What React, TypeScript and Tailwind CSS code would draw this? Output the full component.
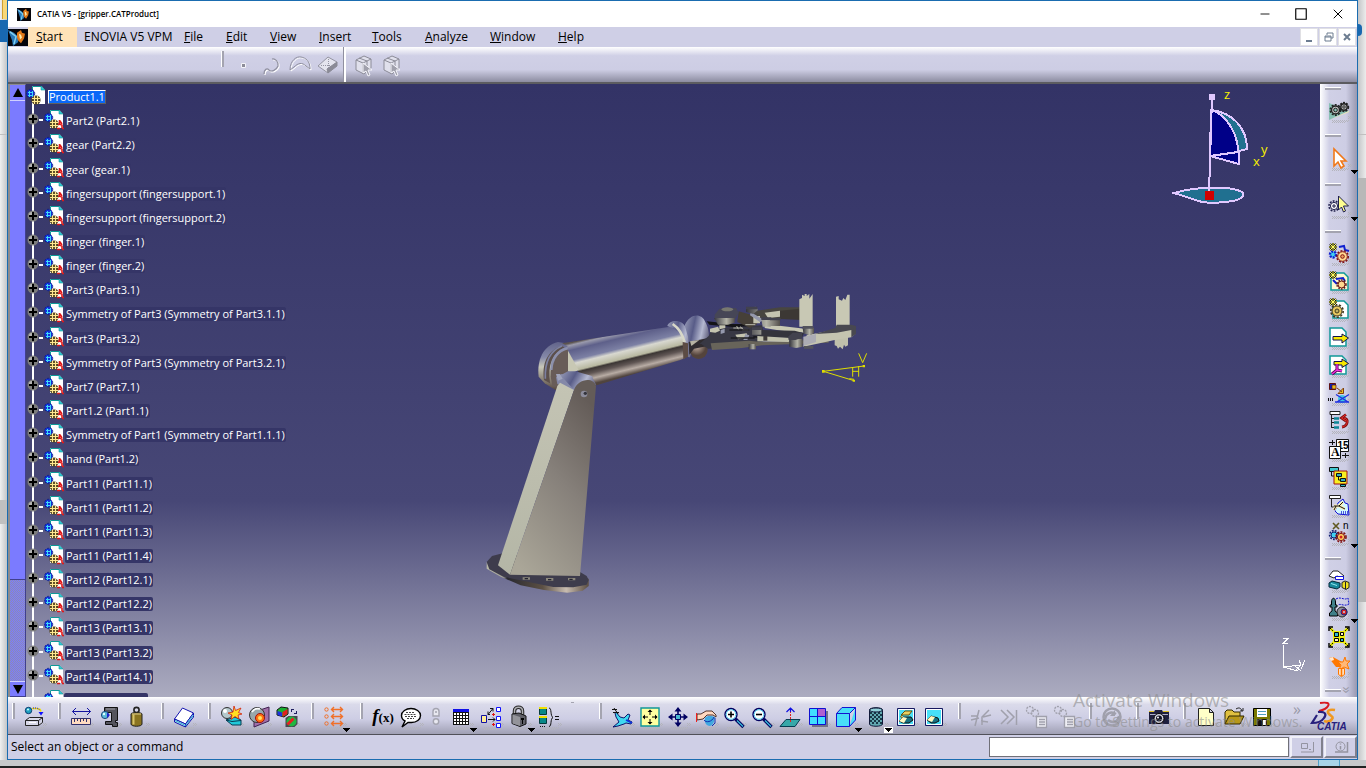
import React from 'react';
import { Minus, Square, X } from 'lucide-react';

const N = '#000060';

/* Toolbar glyphs, all drawn on a 22x22 grid */
const glyphs: Record<string, React.ReactNode> = {
  importBox: (
    <>
      <circle cx="5.5" cy="4.5" r="3.2" fill="#1ea0c0" stroke="#0a3c70" />
      <circle cx="5" cy="3.5" r="1" fill="#d0ffff" />
      <path d="M9 2.5h5l3 1 1 2" fill="none" stroke="#f0e000" strokeWidth="1.6" />
      <path d="M10 2h4l3 2" fill="none" stroke="#1010ff" strokeDasharray="1 1" />
      <path d="M15.5 6h5l-2.5 3.5z" fill="#1010ff" />
      <path d="M2.500 14.500h13v5h-13zM2.500 14.500l4-3h13l-4 3M19.500 11.500v5l-4 3" fill="#d8d8e8" stroke="#222" />
      <path d="M6 16.5h7" stroke="#fff" />
    </>
  ),
  ruler: (
    <>
      <path d="M2.500 5.500h18M6 2L2.500 5.500 6 9M17 2l3.500 3.500L17 9" fill="none" stroke="#1414a0" />
      <path d="M1.500 12.500h19v6h-19z" fill="#ffdcc0" stroke="#30306a" />
      <path d="M4.500 13v3M7.500 13v2M10.500 13v3M13.500 13v2M16.500 13v3" stroke="#30306a" />
    </>
  ),
  clamp: (
    <>
      <path d="M6.500 1.500h13v13h-2v2h2v4h-5v-2h-7v-3h6v-9h-7z" fill="#55555d" stroke="#111" />
      <path d="M8 3h9" stroke="#a0a0a8" />
      <circle cx="7" cy="9" r="3.600" fill="#58b8d8" stroke="#1a4a80" />
      <circle cx="6" cy="8" r="1.200" fill="#e0ffff" />
      <path d="M9 6.500v5.500l3-3z" fill="#2020d0" />
    </>
  ),
  weight: (
    <>
      <circle cx="10.500" cy="4" r="2.600" fill="none" stroke="#222" strokeWidth="1.600" />
      <path d="M5 8c0-2 11-2 11 0v10c0 3-11 3-11 0z" fill="#8a7420" stroke="#222" />
      <path d="M7.500 8.500v10" stroke="#d8c468" strokeWidth="2" />
      <path d="M6 8h9" stroke="#e0d090" />
    </>
  ),
  book: (
    <>
      <path d="M1.500 13l8-11 11 5-8 11z" fill="#fff" stroke="#1414b0" />
      <path d="M1.500 13v3l11 5v-3zM12.500 18v3l8-10V7z" fill="#b8ecf8" stroke="#1414b0" />
      <path d="M2 14.500l10.500 5 8-10.500" fill="none" stroke="#38b0d0" />
    </>
  ),
  blast: (
    <>
      <circle cx="7" cy="7" r="5.500" fill="#b4c8cc" stroke="#333" />
      <circle cx="5" cy="5" r="2" fill="#fff" />
      <path d="M6 14l6 5h9v-5l-6-3z" fill="#20c8d8" stroke="#073a50" />
      <path d="M6 14l6 1.500 9-1" fill="none" stroke="#073a50" />
      <path d="M14 0l1.500 4.500L21 2l-2.500 4.500L22 8l-4 1 1 4-4-2.500-4 3 1-4.500-4-2 5-1z" fill="#ffe020" stroke="#d02010" strokeWidth=".8" />
    </>
  ),
  section: (
    <>
      <path d="M6 6l15-5v14L6 21z" fill="#a070a8" stroke="#402050" />
      <circle cx="9" cy="9" r="7.500" fill="#98a8ac" stroke="#333" />
      <path d="M4 6c2-3 5-4 8-3" stroke="#fff" strokeWidth="1.600" fill="none" />
      <circle cx="12" cy="12" r="4.500" fill="#ff7010" stroke="#a01010" />
      <circle cx="12" cy="12" r="2" fill="#ffe060" />
    </>
  ),
  cubes: (
    <>
      <path d="M1 4l4-3 7 1v6l-4 3-7-2z" fill="#18b030" stroke="#111" />
      <path d="M1.500 5l4.500 1.500v4L1.500 9z" fill="#2030e0" />
      <path d="M6.500 6l5-3v5l-5 3z" fill="#e02020" />
      <path d="M15 3.500h3M15.500 3v3M21 7.500h-3M20.500 8V5" stroke="#202060" />
      <path d="M9.500 12l3-2h9v8l-3 3h-9z" fill="#484850" />
      <circle cx="15.500" cy="15.500" r="5" fill="#20b840" />
      <path d="M11.500 18.500l6-6" stroke="#e82020" strokeWidth="3" />
    </>
  ),
  constraints: (
    <g stroke="#f07028" fill="none">
      {[3.5, 10.5, 17.5].map((y) => (
        <g key={y}>
          <circle cx="3.5" cy={y} r="1.7" />
          <path d={`M8.5 ${y}h11M11 ${y - 2.5}L8.5 ${y} 11 ${y + 2.5}M17 ${y - 2.5}l2.5 2.5-2.5 2.5`} strokeWidth="1.4" />
        </g>
      ))}
    </g>
  ),
  bubble: (
    <>
      <path d="M11 2.500c5 0 9.500 3 9.500 7s-4 7-9 7H8L2 21l3-6c-2-1-3.500-3-3.500-5.500 0-4 4.500-7 9.500-7z" fill="#fff" stroke="#000" strokeWidth="1.400" />
      <path d="M6 6.500h9M4.500 8.500h12M5 10.500h11M7 12.500h7" stroke="#444" strokeDasharray="2 1" />
    </>
  ),
  tiny: (
    <g fill="none" stroke="#a4a4b0" strokeWidth="1.400">
      <path d="M8 10V5.500c0-4 6-4 6 0V10z" fill="#e8e8f0" />
      <circle cx="11" cy="15.500" r="2.700" fill="#e8e8f0" />
      <path d="M10 6h2" />
    </g>
  ),
  table: (
    <>
      <path d="M3 3h16v16H3z" fill="#fff" />
      <path d="M3 3h16v3H3z" fill="#1010e8" />
      <path d="M3 6.500h16M3 9.500h16M3 12.500h16M3 15.500h16M3 18.500h16M3.500 6v13M6.500 6v13M9.500 6v13M12.500 6v13M15.500 6v13M18.500 6v13" stroke="#111" />
    </>
  ),
  tree: (
    <>
      <path d="M1.500 9.500h5v7h-5z" fill="#ffec98" stroke="#1010a0" />
      <path d="M8 13.500h7M8 8.500l5-6M13 11.500l2 2-2 2M10 2.500h3v3M10 8.500H8v-3" fill="none" stroke="#111" />
      <path d="M16.500 1.500h4v4h-4zM16.500 10.500h4v4h-4zM16.500 17.500h4v4h-4z" fill="#fff" stroke="#1010ff" />
      <path d="M12 8.500h3M13.500 7v3M12 18.500h3M13.500 17v3" stroke="#e01010" />
    </>
  ),
  lock: (
    <>
      <path d="M6.500 9V5c0-5 8-5 8 0v4" fill="none" stroke="#222" strokeWidth="3.500" />
      <path d="M6.500 9V5c0-5 8-5 8 0v4" fill="none" stroke="#b0b0b4" strokeWidth="1.500" />
      <path d="M4 8l7-1 7 3v8l-6 2.500-8-3z" fill="#606068" stroke="#111" />
      <path d="M4.500 8.500L12 11v9l-7.500-2.500z" fill="#94949a" />
      <path d="M13 12h3v2h-1v4h-1v-4h-1z" fill="#000" />
    </>
  ),
  brace: (
    <>
      <path d="M1.500 2.500h7v6h-7zM1.500 11.500h7v6h-7z" fill="#088888" stroke="#043c3c" />
      <path d="M1 2h8M1 11h8" stroke="#f0e000" strokeWidth="2" />
      <path d="M2 20.500h6" stroke="#111" strokeDasharray="1 1" />
      <path d="M11 2c3 0 1 8 4 9.500-3 1-1 9-4 9" fill="none" stroke="#111" />
      <path d="M17 10.500h4M17 13.500h4" stroke="#111" />
    </>
  ),
  plane: (
    <>
      <path d="M5 6l4 5 4 1 4-4 2 1-2 5 4 2-1 2-5-1-2 1-6 2-5 1 6-5-3-5-1-4z" fill="#40d8f0" stroke={N} strokeWidth=".9" />
      <path d="M1 3.500h5M2 6.500h6M3 2l4 6" stroke="#111" />
      <path d="M15 14l6 3" stroke="#1030e0" strokeWidth="1.600" />
    </>
  ),
  fit: (
    <>
      <path d="M2 2h18v18H2z" fill="#ffffa0" stroke="#109898" strokeWidth="1.400" />
      <path d="M11 4v5M11 13v5M4 11h5M13 11h5" stroke="#000" />
      <path d="M8.500 6L11 3.500 13.500 6zM8.500 16l2.500 2.500 2.500-2.500zM6 8.500L3.500 11 6 13.500zM16 8.500l2.500 2.500-2.500 2.500z" />
    </>
  ),
  pan: (
    <>
      <path d="M11 3v16M3 11h16" stroke={N} strokeWidth="1.600" />
      <path d="M7.500 5.500L11 1l3.500 4.500zM7.500 16.500L11 21l3.500-4.500zM5.500 7.500L1 11l4.500 3.500zM16.500 7.500L21 11l-4.500 3.500z" fill={N} />
      <path d="M8.500 8.500h5v5h-5z" fill="#48b8d0" stroke={N} />
    </>
  ),
  rotate: (
    <>
      <path d="M2 8h4l5-3h6l4 4v2l-3-2h-6l-4 4-6 1z" fill="#ffd8c0" stroke="#402018" strokeWidth=".9" />
      <path d="M1.500 7v9" stroke="#f02020" />
      <path d="M10 12c2-3 7-2 10-1-1 4-1 8-5 9-4 0-6-4-5-8z" fill="#40a8e0" />
      <path d="M9 14c2 3 8 2 10-3M20 12v5l-3 3" fill="none" stroke="#1030b0" />
    </>
  ),
  zoomIn: (
    <>
      <path d="M12.500 13l8 8" stroke={N} strokeWidth="3.400" />
      <path d="M14 14.500l6 6" stroke="#38c0d8" strokeWidth="1.200" />
      <circle cx="8" cy="8.500" r="6" fill="#fff" stroke={N} strokeWidth="1.400" />
      <circle cx="8" cy="8.500" r="4.800" fill="none" stroke="#50d0f0" />
      <path d="M5 8.500h6M8 5.500v6" stroke="#000" strokeWidth="1.600" />
    </>
  ),
  zoomOut: (
    <>
      <path d="M12.500 13l8 8" stroke={N} strokeWidth="3.400" />
      <path d="M14 14.500l6 6" stroke="#38c0d8" strokeWidth="1.200" />
      <circle cx="8" cy="8.500" r="6" fill="#fff" stroke={N} strokeWidth="1.400" />
      <circle cx="8" cy="8.500" r="4.800" fill="none" stroke="#50d0f0" />
      <path d="M5 8.500h6" stroke="#000" strokeWidth="1.600" />
    </>
  ),
  normal: (
    <>
      <path d="M1 20.500l6-7h14l-5 7z" fill="#38a8a8" stroke="#063c50" />
      <path d="M11.500 5v12" stroke="#e02020" strokeDasharray="2 1" />
      <path d="M7.500 6L11.500 2l4 4M11.500 2v4" fill="none" stroke="#1010e0" strokeWidth="1.200" />
    </>
  ),
  multi: (
    <>
      <path d="M5 5h16v16H5z" fill="#707088" />
      <path d="M2.500 2.500h16v16h-16z" fill="#40e0ff" stroke="#1010d0" />
      <path d="M11 3h7v7h-7z" fill="#b060d0" />
      <path d="M10.500 3v16M2.500 10.500h16" stroke="#1010d0" />
    </>
  ),
  cube: (
    <path d="M1.500 7.500h13v13h-13zM1.500 7.500L7 1.500h13.500l-6 6M20.500 1.500V14l-6 6.500" fill="#48e0f8" stroke="#1414d0" />
  ),
  cylinder: (
    <>
      <path d="M4.500 4c0-3 13-3 13 0v14c0 3-13 3-13 0z" fill="#60a8b0" stroke="#101838" />
      <path d="M5 7h12M5 11h12M5 15h12" stroke="#183848" strokeWidth="2" strokeDasharray="2 2" />
      <path d="M7 9h10M7 13h10M7 17h10" stroke="#183848" strokeWidth="2" strokeDasharray="2 2" />
      <ellipse cx="11" cy="4" rx="6.500" ry="2" fill="#90d0d8" stroke="#101838" />
    </>
  ),
  hideShow: (
    <>
      <path d="M2.500 2.500h17v17h-17z" fill="#48e0f8" stroke="#181860" />
      <path d="M3.500 3.500h15v15h-15z" fill="none" stroke="#fff" />
      <path d="M6 9l4-4h7l-3 4zM8 9c-3 1-3 2-1 3" fill="#e8d060" stroke="#605010" />
      <path d="M4 15l4-4h8l2 3-4 3H8z" fill="#187080" stroke="#111" />
      <path d="M4 15l4-4 4 1-3 5z" fill="#fff8c0" />
    </>
  ),
  swapSpace: (
    <>
      <path d="M2.500 2.500h17v17h-17z" fill="#48e0f8" stroke="#181860" />
      <path d="M3.500 3.500h15v15h-15z" fill="none" stroke="#fff" />
      <path d="M4 14l4-4 7 2 1 3-4 2H8z" fill="#187080" stroke="#111" />
      <path d="M4 14l4-4 4 1-3 5z" fill="#fff8c0" />
    </>
  ),
  cut: (
    <path d="M1 14l8-2M9 4L5 20M1 10h6M19 4l-7 7v8M13 11l8-2M11 15l7 1" fill="none" stroke="#a0a0ac" strokeWidth="1.500" />
  ),
  last: <path d="M3 4l7 7-7 7M9 4l7 7-7 7M18.500 4v15" fill="none" stroke="#a0a0ac" strokeWidth="1.500" />,
  copyGear: (
    <g fill="none" stroke="#a0a0ac" strokeWidth="1.300">
      <circle cx="4" cy="4" r="3.500" strokeDasharray="2 1" />
      <circle cx="9" cy="7" r="3.500" strokeDasharray="2 1" />
      <path d="M10.500 10.500h10v11h-10z" fill="#eeeef4" />
      <path d="M13 13.500h6M13 16h6M13 18.500h6" />
    </g>
  ),
  update: (
    <g fill="none" stroke="#a0a0ac" strokeWidth="2.500">
      <circle cx="11" cy="11" r="8.500" />
      <path d="M4 13c1-6 6-8 11-5M18 10c-1 6-6 8-11 4" />
      <path d="M14 4v6H9z" fill="#a0a0ac" stroke="none" />
    </g>
  ),
  camera: (
    <>
      <path d="M1 6h5l1-2h7l1 2h6v12H1z" fill="#20203c" />
      <path d="M1 5.500h5M15 5.500h6" stroke="#e0c020" />
      <path d="M2 8.500h18" stroke="#b0b0c8" />
      <circle cx="11" cy="12.500" r="5" fill="#d0d0dc" stroke="#000" />
      <circle cx="11" cy="12.500" r="3" fill="#101020" />
      <circle cx="10" cy="11.500" r="1" fill="#fff" />
    </>
  ),
  newDoc: (
    <path d="M3.500 2.500h11l4 4v13h-15zM14.500 2.500v4h4" fill="#ffffc8" stroke="#222" />
  ),
  open: (
    <>
      <path d="M2 18V6l2-2h5l2 2h6v4" fill="#e0c040" stroke="#302800" />
      <path d="M2 18l4-8h15l-4 8z" fill="#b89818" stroke="#302800" />
      <path d="M13 3c3-2 5-1 6 2M17 5h3V2" fill="none" stroke="#222" />
    </>
  ),
  save: (
    <>
      <path d="M2.500 2.500h17v16l-1 1h-16z" fill="#787800" stroke="#000" />
      <path d="M6 3h10v8H6z" fill="#fff" />
      <path d="M7 5.500h8M7 8.500h8" stroke="#50a0c0" />
      <path d="M6 13h10v6H6z" fill="#101010" />
      <path d="M12 14h3v5h-3z" fill="#fff" />
    </>
  ),
  gearsPlane: (
    <>
      <path d="M1 4l20 8-20 9z" fill="#88c0b4" />
      <path d="M1 21l20-9v1z" fill="#f0e8b0" />
      <circle cx="7.500" cy="11" r="4" fill="#c0c0c0" stroke="#222" strokeWidth="1.400" />
      <circle cx="7.500" cy="11" r="5.200" fill="none" stroke="#222" strokeWidth="1.600" strokeDasharray="2 1.300" />
      <circle cx="7.500" cy="11" r="1.800" fill="#88c0b4" stroke="#222" />
      <circle cx="16" cy="8" r="3.200" fill="#b0b0b0" stroke="#222" strokeWidth="1.400" />
      <circle cx="16" cy="8" r="4.400" fill="none" stroke="#222" strokeWidth="1.600" strokeDasharray="2 1.200" />
      <circle cx="16" cy="8" r="1.200" fill="#e0e0e0" stroke="#222" />
    </>
  ),
  arrow: (
    <path d="M6 2v17l4-4 3 6 3-2-3-5h5z" fill="#fff" stroke="#f07818" strokeWidth="1.600" />
  ),
  gearArrow: (
    <>
      <circle cx="6" cy="11" r="3.600" fill="#fff" stroke="#20204c" />
      <circle cx="6" cy="11" r="5" fill="none" stroke="#20204c" strokeWidth="1.600" strokeDasharray="1.800 1.300" />
      <path d="M4 11h4M6 9v4" stroke="#20204c" />
      <path d="M10.500 1v14l3-3 2 5 2-1-2-5h5z" fill="#ffff90" stroke="#20204c" />
    </>
  ),
  addComp: (
    <>
      <circle cx="5" cy="12.500" r="3" fill="#40d0f0" stroke="#1020d0" strokeWidth="2.400" strokeDasharray="2 1" />
      <path d="M11 5l5-1 1 4 4 1" stroke="#1020d0" strokeWidth="2" fill="none" />
      <circle cx="14.500" cy="14.500" r="4.800" fill="#ffd890" stroke="#801010" />
      <circle cx="14.500" cy="14.500" r="5.800" fill="none" stroke="#801010" strokeWidth="1.400" strokeDasharray="2 1.500" />
      <circle cx="14.500" cy="14.500" r="1.800" fill="#f0a060" stroke="#801010" />
      <path d="M5 1v8M1 5h8M2 2l6 6M8 2L2 8" stroke="#000" strokeWidth="2" />
      <path d="M5 1v8M1 5h8M2 2l6 6M8 2L2 8" stroke="#ffff60" />
    </>
  ),
  addProduct: (
    <>
      <path d="M3 3h13l4 4v13H3z" fill="#fff8d0" stroke="#109898" strokeWidth="1.500" />
      <path d="M8 9l7-1 2 3M5 10l4 4" stroke="#1020d0" strokeWidth="2" fill="none" />
      <circle cx="13.500" cy="14.500" r="3.500" fill="#ffd890" stroke="#601010" />
      <circle cx="13.500" cy="14.500" r="4.500" fill="none" stroke="#601010" strokeWidth="1.400" strokeDasharray="1.600 1.300" />
      <path d="M5 1v8M1 5h8M2 2l6 6M8 2L2 8" stroke="#000" strokeWidth="2" />
      <path d="M5 1v8M1 5h8M2 2l6 6M8 2L2 8" stroke="#ffff60" />
    </>
  ),
  addPart: (
    <>
      <path d="M5 3h11l4 4v13H5z" fill="#fff" stroke="#109898" strokeWidth="1.500" />
      <circle cx="9" cy="13" r="5" fill="#e8c860" stroke="#40381c" />
      <circle cx="9" cy="13" r="6.200" fill="none" stroke="#40381c" strokeWidth="1.600" strokeDasharray="2.200 1.600" />
      <circle cx="9" cy="13" r="2" fill="#c0b060" stroke="#40381c" />
      <path d="M5 0v8M1 4h8M2 1l6 6M8 1L2 7" stroke="#000" strokeWidth="2" />
      <path d="M5 0v8M1 4h8M2 1l6 6M8 1L2 7" stroke="#ffff60" />
    </>
  ),
  existing: (
    <>
      <path d="M2 2h12l4 4v14H2z" fill="#fff" stroke="#109898" strokeWidth="1.500" />
      <path d="M5 10.500h9V8l6.500 4-6.500 5v-3H5z" fill="#f8e800" stroke="#10104c" />
    </>
  ),
  existingPos: (
    <>
      <path d="M2 2h12l4 4v14H2z" fill="#fff" stroke="#109898" strokeWidth="1.500" />
      <path d="M6 7.500h8V5l6.500 4.500L14 13.500V11H6z" fill="#f8e800" stroke="#10104c" />
      <path d="M9 10v6l-5 4M9 16l5 1" fill="none" stroke="#500050" strokeWidth="3" />
      <path d="M9 10v6l-5 4M9 16l5 1" fill="none" stroke="#f030e0" strokeWidth="1.400" />
    </>
  ),
  replace: (
    <>
      <path d="M1.500 1.500h6v6h-6z" fill="#1020b0" stroke="#601010" />
      <path d="M4 3h4v4H4z" fill="#e8c020" stroke="#601010" strokeWidth=".7" />
      <path d="M9 6l5 4M15.500 6v5.500H10z" fill="#e8c020" stroke="#804010" />
      <circle cx="14" cy="17" r="4" fill="#40c8e0" />
      <path d="M8 12.500l13 8M21 12.500L8 20.500M7 20h14" stroke="#2030e0" strokeWidth="1.400" />
      <path d="M0 17.500h6" stroke="#111" strokeWidth="3" strokeDasharray="1 1" />
    </>
  ),
  reorder: (
    <>
      <path d="M2 1.500h10v3H2z" fill="#fff" stroke="#222" />
      <path d="M3.500 5v13M3.500 8.500h4M3.500 12.500h4M3.500 17.500h4" stroke="#222" />
      <path d="M6 8.500h5M6 12.500h5M6 17.500h5" stroke="#108898" strokeWidth="2.400" />
      <path d="M14 17c6-1 7-8 2-9M18 4.500l-4.500 3.500 4.500 3" fill="none" stroke="#801010" strokeWidth="2.800" />
      <path d="M14 17c6-1 7-8 2-9M18 4.500l-4.500 3.500 4.500 3" fill="none" stroke="#f03030" />
    </>
  ),
  numbering: (
    <>
      <path d="M8.500 1.500h12v12h-12z" fill="#fff" stroke="#111" />
      <text x="9.500" y="11" fontSize="10" fontWeight="bold" fontFamily="Liberation Sans, sans-serif" fill="#000">15</text>
      <path d="M1.500 8.500h11v12h-11z" fill="#fff" stroke="#111" />
      <text x="3" y="18" fontSize="12" fontWeight="bold" fontFamily="Liberation Serif, serif" fill="#000">A</text>
      <path d="M1 4.500h6M4.500 2v5M14 17.500h7M17.500 15v5" stroke="#111" />
    </>
  ),
  symbolic: (
    <>
      <path d="M1.500 1.500h9v4h-9z" fill="#40c8d0" stroke="#111" />
      <path d="M3.500 6v4h3" stroke="#111" fill="none" />
      <path d="M6 5h13v13H6z" fill="#f8f020" stroke="#a01010" />
      <path d="M8.500 7.500h5v3h-5zM12.500 12.500h5v3h-5zM12.500 18.500h5v2h-5z" fill="#30b0c0" stroke="#111" />
      <path d="M10.500 11v3h2" fill="none" stroke="#111" />
    </>
  ),
  load: (
    <>
      <path d="M1.500 1.500h11v3h-11z" fill="#fff" stroke="#222" />
      <path d="M3.500 5v8H8" fill="none" stroke="#222" />
      <path d="M10 9l5-4 2 4 3 1 1 11-11-1-3-3z" fill="#d0f8ff" stroke="#1010d0" />
      <path d="M6 12h5l4-4M11 12l6 3M8 12l-2 4" fill="none" stroke="#fff0b0" strokeWidth="3" />
      <path d="M6 12h5l4-4M11 12l6 3M8 12l-2 4" fill="none" stroke="#111" />
      <path d="M13.500 17v3M15.500 17v3M17.500 17v3M19.500 17v3" stroke="#1010d0" strokeWidth=".7" />
    </>
  ),
  multiInst: (
    <>
      <path d="M5 1l6 6M11 1L5 7" stroke="#605820" strokeWidth="1.600" />
      <text x="15" y="7" fontSize="10" fontFamily="Liberation Sans, sans-serif" fill="#000">n</text>
      <circle cx="6" cy="13" r="3" fill="#40d0f0" stroke="#102070" />
      <circle cx="6" cy="13" r="4.400" fill="none" stroke="#102070" strokeWidth="1.600" strokeDasharray="1.800 1.200" />
      <circle cx="13" cy="15" r="3.600" fill="#ffd060" stroke="#801010" />
      <circle cx="13" cy="15" r="5" fill="none" stroke="#801010" strokeWidth="1.600" strokeDasharray="2 1.200" />
      <circle cx="13" cy="15" r="1.500" fill="#d02020" />
    </>
  ),
  manipulate: (
    <>
      <path d="M1 7l4-5h5l6 5-2 2-5-2-3 2z" fill="#fff" stroke="#222" />
      <path d="M7.500 7.500h8v3h-8z" fill="#fff" stroke="#1010e0" />
      <path d="M1 14l3-2 8 2v4l-3 2-8-2z" fill="#18889c" stroke="#062838" />
      <path d="M3 14.500l6 2" stroke="#90e8f0" />
      <path d="M14 13.500l3-1.500 4 1.500v5l-3 2-4-2z" fill="#f0e020" stroke="#222" />
      <path d="M17.500 13v7" stroke="#222" />
    </>
  ),
  snap: (
    <>
      <path d="M8 2c5-3 8 2 12-1l1 6c-5 3-8-1-11 1" fill="none" stroke="#1010d0" strokeDasharray="2 1" />
      <path d="M1.500 19h8v-3L7 14v-4h2V8H7.500V5c0-5-4-5-4 0v3H2v2h2v4l-2.500 2z" fill="#408088" stroke="#000" />
      <circle cx="14" cy="15" r="5" fill="#909098" stroke="#222" />
      <circle cx="16" cy="15" r="3" fill="#d02020" stroke="#202080" />
      <circle cx="16" cy="15" r="1" fill="#c0d0f0" />
    </>
  ),
  explode: (
    <>
      <path d="M2 2l18 18M20 2L2 20" stroke="#e8e800" strokeWidth="2.600" />
      <path d="M2 2l18 18M20 2L2 20" stroke="#000" strokeDasharray="2 1" />
      <path d="M1 5V1h4M17 1h4v4M1 17v4h4M17 21h4v-4" fill="none" stroke="#000" strokeWidth="1.400" />
      <path d="M5 5h12v12H5z" fill="#f0f010" />
      <path d="M6.500 6.500h4v4h-4zM12.500 12.500h3v3h-3z" fill="#30b8d0" stroke="#000" />
      <path d="M12.500 6.500h3v3h-3zM6.500 12.500h4v3h-4z" fill="#fff0c0" stroke="#000" />
    </>
  ),
  clash: (
    <>
      <path d="M1 3l4-1 9 5-2 5H8z" fill="#ff7800" />
      <path d="M1 3l4-1 1 3-3 1z" fill="#ffe8d0" />
      <path d="M17 2l1 4h4l-3 3 2 5-5-2-5 3 2-5-3-3h5z" fill="#ffb878" stroke="#ff7800" />
      <path d="M10.500 13.500h6v6l-3 2-3-2z" fill="#ffe0c0" stroke="#ff7800" />
      <path d="M13.500 13v8" stroke="#ff7800" strokeWidth="1.500" />
    </>
  ),
  point: <path d="M8.500 9.500h4v4h-4z" fill="#8c8c98" stroke="#f4f4fa" />,
  curve: (
    <>
      <path d="M3 20c0-5 3-6 5-4s7 1 9-4c1-4-3-8-6-7" transform="translate(1 1)" fill="none" stroke="#fff" strokeWidth="1.200" />
      <path d="M3 20c0-5 3-6 5-4s7 1 9-4c1-4-3-8-6-7" fill="none" stroke="#9090a0" strokeWidth="1.200" />
    </>
  ),
  surface: (
    <>
      <path d="M1 16C1 6 8 2 12 3c5 1 9 4 9 12l-4-3c-4-4-8-3-12 1z" transform="translate(1 1)" fill="none" stroke="#fff" />
      <path d="M1 16C1 6 8 2 12 3c5 1 9 4 9 12l-4-3c-4-4-8-3-12 1z" fill="none" stroke="#9090a0" />
    </>
  ),
  solid: (
    <>
      <path d="M1 12l10-9 9 5-9 11z" fill="#e4e4ee" stroke="#9494a2" />
      <path d="M10 15l10-7v4l-9 7z" fill="#8a8a96" stroke="#8a8a96" />
      <path d="M4 11.500h10M11.500 5v9" stroke="#9494a2" strokeDasharray="1 1" />
    </>
  ),
  boxArrow: (
    <>
      <path d="M3 6l8-4 7 3v9l-7 6-8-4zM3 6l7 3v11M10 9l8-4M6 4l8 3v6" fill="#e0e0ec" stroke="#8c8c98" />
      <path d="M10 9v10l3-2 2 5 2-1-2-5h4z" fill="#a0a0ac" stroke="#f4f4fa" />
    </>
  ),
};

const dim = ['tiny', 'cut', 'last', 'copyGear', 'update', 'point', 'curve', 'surface', 'solid', 'boxArrow'];

function Glyph({ name }: { name: string }) {
  return (
    <svg viewBox="0 0 22 22" className="w-[22px] h-[22px] overflow-visible" aria-hidden="true">
      {!dim.includes(name) && (
        <path d="M4 21.500h17M5 22.500h16M4 23.500h14M20 17.500h4M21 18.500h3M20 19.500h4" stroke="#b4b4bc" strokeDasharray="1 1" />
      )}
      {glyphs[name]}
    </svg>
  );
}

interface ToolProps {
  name: string;
  label: string;
  menu?: boolean;
  lit?: boolean;
  tall?: boolean;
  narrow?: boolean;
  vertical?: boolean;
}

function Tool({ name, label, menu, lit, tall, narrow, vertical }: ToolProps) {
  let size = 'w-7 h-7';
  if (tall) size = 'w-7 h-[30px]';
  if (narrow) size = 'w-[22px] h-7';
  if (menu && !vertical) size = 'w-[30px] h-7 pr-[2px]';
  return (
    <button type="button" aria-label={label} className={`relative flex items-center justify-center shrink-0 ${size}`}>
      {name === 'formula' ? (
        <span className="font-['Liberation_Serif',serif] font-bold leading-5 text-black whitespace-nowrap">
          <i className="text-[19px]">f</i>
          <span className="text-[13px]">(x)</span>
        </span>
      ) : (
        <Glyph name={name} />
      )}
      {menu && (
        <span className={`absolute ${vertical ? '-right-[6px] -bottom-[2px]' : '-right-px -bottom-[2px]'} ${lit ? 'bg-white' : ''} p-px`}>
          <svg viewBox="0 0 7 4" className="w-[7px] h-1" shapeRendering="crispEdges" aria-hidden="true"><path d="M0 0h7L3.500 4z" /></svg>
        </span>
      )}
    </button>
  );
}

function Grip() {
  return (
    <div className="w-[19px] h-7 shrink-0 flex justify-center pl-1">
      <div className="w-[3px] h-4 bg-[#a4a4b0] border-l border-white" />
    </div>
  );
}

function GripH() {
  return (
    <div className="h-[19px] shrink-0 flex items-center pt-1">
      <div className="h-[3px] w-4 bg-[#a4a4b0] border-t border-white" />
    </div>
  );
}

const bottomTools: (ToolProps | '|' | ' ')[] = [
  { name: 'importBox', label: 'Insert object' }, '|',
  { name: 'ruler', label: 'Measure between' },
  { name: 'clamp', label: 'Measure item' },
  { name: 'weight', label: 'Measure inertia' }, '|',
  { name: 'book', label: 'Catalog browser' }, '|',
  { name: 'blast', label: 'Clash' },
  { name: 'section', label: 'Sectioning' },
  { name: 'cubes', label: 'Distance and band analysis' }, '|',
  { name: 'constraints', label: 'Constraints', menu: true }, '|',
  { name: 'formula', label: 'Formula' },
  { name: 'bubble', label: 'Comment' },
  { name: 'tiny', label: 'Check', narrow: true },
  { name: 'table', label: 'Design table', menu: true },
  { name: 'tree', label: 'Knowledge inspector' },
  { name: 'lock', label: 'Lock', menu: true },
  { name: 'brace', label: 'Equivalent dimensions' }, ' ', '|',
  { name: 'plane', label: 'Fly mode' },
  { name: 'fit', label: 'Fit all in' },
  { name: 'pan', label: 'Pan' },
  { name: 'rotate', label: 'Rotate' },
  { name: 'zoomIn', label: 'Zoom in' },
  { name: 'zoomOut', label: 'Zoom out' },
  { name: 'normal', label: 'Normal view' },
  { name: 'multi', label: 'Create multi-view' },
  { name: 'cube', label: 'Isometric view', menu: true },
  { name: 'cylinder', label: 'Shading', menu: true, lit: true },
  { name: 'hideShow', label: 'Hide/Show' },
  { name: 'swapSpace', label: 'Swap visible space' }, '|',
  { name: 'cut', label: 'Cut' },
  { name: 'last', label: 'Go to end' },
  { name: 'copyGear', label: 'Copy structure' },
  { name: 'copyGear', label: 'Paste structure' }, '|',
  { name: 'update', label: 'Update all' }, '|',
  { name: 'camera', label: 'Capture' }, '|',
  { name: 'newDoc', label: 'New' },
  { name: 'open', label: 'Open' },
  { name: 'save', label: 'Save' },
];

const sideTools: (ToolProps | '|')[] = [
  { name: 'gearsPlane', label: 'Assembly design' }, '|',
  { name: 'arrow', label: 'Select', menu: true, tall: true }, '|',
  { name: 'gearArrow', label: 'Product selection', menu: true }, '|',
  { name: 'addComp', label: 'Component' },
  { name: 'addProduct', label: 'Product' },
  { name: 'addPart', label: 'Part' },
  { name: 'existing', label: 'Existing component' },
  { name: 'existingPos', label: 'Existing component with positioning' },
  { name: 'replace', label: 'Replace component' },
  { name: 'reorder', label: 'Graph tree reordering' },
  { name: 'numbering', label: 'Generate numbering' },
  { name: 'symbolic', label: 'Selective load' },
  { name: 'load', label: 'Manage representations' },
  { name: 'multiInst', label: 'Multi instantiation', menu: true }, '|',
  { name: 'manipulate', label: 'Manipulation' },
  { name: 'snap', label: 'Snap', menu: true },
  { name: 'explode', label: 'Explode', tall: true },
  { name: 'clash', label: 'Stop manipulate on clash' },
];

const menus = [
  { name: 'File', width: 'w-[42px]' },
  { name: 'Edit', width: 'w-11' },
  { name: 'View', width: 'w-[49px]' },
  { name: 'Insert', width: 'w-[53px]' },
  { name: 'Tools', width: 'w-[53px]' },
  { name: 'Analyze', width: 'w-[65px]' },
  { name: 'Window', width: 'w-[68px]' },
  { name: 'Help', width: 'w-12' },
];

const parts = [
  'Part2 (Part2.1)',
  'gear (Part2.2)',
  'gear (gear.1)',
  'fingersupport (fingersupport.1)',
  'fingersupport (fingersupport.2)',
  'finger (finger.1)',
  'finger (finger.2)',
  'Part3 (Part3.1)',
  'Symmetry of Part3 (Symmetry of Part3.1.1)',
  'Part3 (Part3.2)',
  'Symmetry of Part3 (Symmetry of Part3.2.1)',
  'Part7 (Part7.1)',
  'Part1.2 (Part1.1)',
  'Symmetry of Part1 (Symmetry of Part1.1.1)',
  'hand (Part1.2)',
  'Part11 (Part11.1)',
  'Part11 (Part11.2)',
  'Part11 (Part11.3)',
  'Part11 (Part11.4)',
  'Part12 (Part12.1)',
  'Part12 (Part12.2)',
  'Part13 (Part13.1)',
  'Part13 (Part13.2)',
  'Part14 (Part14.1)',
];

function Comet({ className }: { className: string }) {
  return (
    <svg viewBox="0 0 20 18" className={className} preserveAspectRatio="none" aria-hidden="true">
      <path d="M0 0h20v18H0z" fill="#05060c" />
      <path d="M0 1l6 3 5 5-1 5-5 4-1-6z" fill="#2878b8" />
      <path d="M2 3l6 5-2 8" stroke="#80d0f0" strokeWidth="1.500" fill="none" />
      <path d="M9 4l4-3 1 3 3 1-1 5-3 5-3-3-1-3z" fill="#e07818" />
      <path d="M11 5l2 1 1 3-2 2z" fill="#fff0b0" />
    </svg>
  );
}

function DocIcon({ part }: { part?: boolean }) {
  return (
    <svg viewBox="0 0 20 21" className="w-5 h-[21px]" aria-hidden="true">
      <path d="M6 1h9.500l3.500 4v14H6z" fill="#fff" />
      <path d="M6.500 8V1.500h9" fill="none" stroke="#109898" />
      <path d="M15 1l4 4h-4z" fill="#30c8d8" stroke="#109898" strokeWidth=".6" />
      <circle cx="4.500" cy="8.500" r="4" fill="#1030d8" />
      <circle cx="4.500" cy="8.500" r="4.200" fill="none" stroke="#081c80" strokeDasharray="1.500 1.500" />
      <path d="M2 7.500h5M2 10.500h5M3.500 6v6M6.500 6v6" stroke="#40d8f8" />
      <circle cx="10" cy="15" r="4.600" fill="#50401c" />
      <path d="M6 13.500h8M6 16.500h8M8.500 11v8M11.500 11v8" stroke="#ffe890" strokeWidth="1.200" />
      {part && <path d="M15.500 11v3l-1 2M15 15l3 1v3M16 12l2 3M13 19.500h3M18 19.500h2" stroke="#e01818" strokeWidth="1.600" fill="none" />}
    </svg>
  );
}

function Node() {
  return (
    <svg viewBox="0 0 12 12" className="w-3 h-3" aria-hidden="true">
      <circle cx="6" cy="6" r="5.500" fill="#7c7c7c" />
      <circle cx="4.500" cy="4.500" r="2.500" fill="#b4b4b4" />
      <path d="M2 6h8M6 2v8" stroke="#000" strokeWidth="2" />
    </svg>
  );
}

function Robot() {
  return (
    <svg viewBox="0 0 1260 990" className="absolute left-[444px] top-[196px] w-[420px] h-[330px]" role="img" aria-label="Gripper arm">
      <defs>
        <linearGradient id="upper" gradientUnits="userSpaceOnUse" x1="440" y1="155" x2="472" y2="286">
          <stop offset="0" stopColor="#5c5450" />
          <stop offset=".05" stopColor="#9a9aac" />
          <stop offset=".16" stopColor="#5e608a" />
          <stop offset=".38" stopColor="#7c80a4" />
          <stop offset=".46" stopColor="#d8d8d0" />
          <stop offset=".62" stopColor="#b8b8a0" />
          <stop offset=".66" stopColor="#3c3634" />
          <stop offset=".76" stopColor="#605654" />
          <stop offset=".88" stopColor="#b8aca4" />
          <stop offset="1" stopColor="#50443e" />
        </linearGradient>
        <linearGradient id="face" x1=".7" y1="0" x2=".2" y2="1">
          <stop offset="0" stopColor="#645c58" />
          <stop offset=".45" stopColor="#86807a" />
          <stop offset="1" stopColor="#aaa698" />
        </linearGradient>
        <linearGradient id="edge" x1="0" y1="0" x2="0" y2="1">
          <stop offset="0" stopColor="#c4c4b4" />
          <stop offset="1" stopColor="#b4b6a6" />
        </linearGradient>
        <linearGradient id="rim" x1="0" y1="0" x2="1" y2="0">
          <stop offset="0" stopColor="#b8b8a8" />
          <stop offset=".16" stopColor="#a4a498" />
          <stop offset=".2" stopColor="#282830" />
          <stop offset=".55" stopColor="#5c5044" />
          <stop offset=".78" stopColor="#c8bcb0" />
          <stop offset="1" stopColor="#5a4c40" />
        </linearGradient>
        <linearGradient id="joint" x1="0" y1="0" x2="0" y2="1">
          <stop offset="0" stopColor="#62648a" />
          <stop offset=".3" stopColor="#8488a8" />
          <stop offset=".5" stopColor="#c8c8b8" />
          <stop offset="1" stopColor="#4c3c34" />
        </linearGradient>
        <linearGradient id="bell" x1="0" y1=".1" x2="1" y2=".4">
          <stop offset="0" stopColor="#9498b4" />
          <stop offset=".4" stopColor="#585c88" />
          <stop offset=".75" stopColor="#b4b8d0" />
          <stop offset="1" stopColor="#70708c" />
        </linearGradient>
        <linearGradient id="pin" x1="0" y1="0" x2="1" y2="0">
          <stop offset="0" stopColor="#34343c" />
          <stop offset=".6" stopColor="#b4b4a8" />
          <stop offset="1" stopColor="#54504c" />
        </linearGradient>
        <radialGradient id="ball" cx=".4" cy=".3">
          <stop offset="0" stopColor="#c4b0a4" />
          <stop offset="1" stopColor="#54443c" />
        </radialGradient>
      </defs>

      {/* Base plate */}
      <path d="M50 846v20l42 24 60 26 70 14 70 8 46-6 18-14V896z" fill="url(#rim)" />
      <path d="M50 846l16-18 32-8h30L330 876l20 12 6 12-6 14-40 8-60-1-70-14-80-17-42-22z" fill="#3e3c4c" />
      <path d="M158 892h22v7h-22zM228 894h22v8h-22zM294 894h22v7h-22z" fill="#8c887c" />
      <path d="M164 896h10M234 899h10M298 898h10" stroke="#242430" strokeWidth="4" />

      {/* Elbow discs and forearm */}
      <path d="M206 290c-6-50 14-94 58-104l24 4 8 14 4 132-40-4-36-22z" fill="url(#joint)" />
      <path d="M222 300c-6-48 8-86 52-102l10 4c-36 16-52 52-44 108z" fill="#5c504c" />
      <path d="M226 296c-2-46 10-82 50-98" stroke="#7c80a0" strokeWidth="5" fill="none" />
      <path d="M242 290c-2-44 14-76 52-84l14 6v90l-60 20z" fill="#685c58" />
      <path d="M244 270c2-36 20-58 50-66" stroke="#8c90ac" strokeWidth="7" fill="none" />
      <path d="M276 190L600 140l36 18 10 76-15 6-251 76-50-30-36-72-2-16z" fill="url(#upper)" />
      <path d="M294 212l32 58-20 10-12-6z" fill="#c8c8b4" />

      {/* Wrist */}
      <path d="M592 138c6-18 40-22 54 2l12 10 8 60-6 22-14-2-4-50-10-20-20-14z" fill="url(#bell)" />
      <path d="M608 132c18 12 30 30 36 56" fill="none" stroke="#d8d8c8" strokeWidth="8" />
      <path d="M638 186l16 4v40l-14 8z" fill="#5c4c44" />
      <circle cx="686" cy="210" r="27" fill="url(#ball)" />
      <path d="M644 136c16-36 50-38 62-10 8 14 12 30 10 52l-20 4-38 28-4-40z" fill="url(#bell)" />
      <path d="M656 186l58-12 10 22-52 10-14 18z" fill="#302c30" />
      <path d="M660 184l28-4-24 18z" fill="#b8b4a4" />

      {/* Gripper body and links */}
      <path d="M716 168l12-24 148-8 12 46-66 18-108 6-20-14h-6z" fill="#383844" />
      <path d="M722 190l114-8 40 4 200-8v10l-200 8-60 8-90 6z" fill="#68645a" />
      <path d="M710 124l80 8h54v6l-50 4-76-8z" fill="#141418" />
      <path d="M806 94l42 12 14 26-22 12-38-18z" fill="#464038" />
      <path d="M850 94l80-12h60l10 30-70 4-72 2z" fill="#484640" />
      <path d="M884 98l46-6v18l-36 4z" fill="#c4c4b0" />
      <path d="M930 92l60-6 6 34-66-3z" fill="#3c3834" />
      <path d="M734 104l14-18 50-2 8 14-12 22H734z" fill="#464656" />
      <ellipse cx="772" cy="88" rx="18" ry="6" fill="#787870" />
      <path d="M732 114h62v14l-20 6h-30z" fill="url(#pin)" />
      <path d="M720 146l24-6 6 12-14 6-16-2zM748 136h18v8l-18 4zM796 164l34-4 4 12-30 6zM850 108h20v22h-20z" fill="#c4c4b0" />
      <path d="M752 150l12-4v12l-12 4zM826 162l12 4-6 14h-12zM842 96l40 24-12 6-30-20z" fill="#9498ac" />
      <path d="M790 144h28M800 138l6 12M810 140l12 10M826 134h30M816 150h20" stroke="#b8b8ac" strokeWidth="3" />
      <path d="M778 150h60M782 174h72M850 170l40 4" stroke="#1c1c20" strokeWidth="5" />
      <path d="M884 132l120 14 20 4v10l-90-8-50-8z" fill="#c8c8b4" />
      <path d="M860 150l114 2 28 8-8 16-130-6z" fill="#34343c" />
      <path d="M862 168l100 6-6 12-94-2z" fill="#c0c0ac" />
      <path d="M880 168h12v14h-12z" fill="#3c3838" />
      <path d="M828 84l30-4 6 10-14 12-22-6zM874 118h28v22h-24zM902 116h28v22h-28zM846 148h28v16h-28z" fill="url(#pin)" />
      <path d="M828 80h34v8h-34zM874 112h30v8h-30zM900 114h32v7h-32zM846 142h30v8h-30z" fill="#42424e" />
      <path d="M836 192h22v16h-22z" fill="url(#pin)" />

      {/* Fingers */}
      <path d="M988 140V58l8-4v-10l8 4v-6h6v6l8-6v14l10-14v98z" fill="#c8c8b4" />
      <path d="M1098 140V50l8-2v10l10 4 4-8 6 6 6-16h7v96z" fill="#c8c8b4" />
      <path d="M1094 170h40v26l-8 4-4-6-4 14-8-8-6 6-4-8-6-2z" fill="#c0c0ac" />
      <path d="M1010 166l80-16 54-14 12 6v20l-12 10-50 8-94 20z" fill="#c4c4b0" />
      <path d="M1036 162l60-18 4-10h44l14 4v24l-14 10v-22l-44 8z" fill="#484850" />
      <path d="M1000 170l38-8v24l-38 12z" fill="#acacb4" />
      <path d="M958 176h40v24l-20 4-20-4z" fill="url(#pin)" />
      <path d="M954 170l14-12h28v16l-20 6h-20z" fill="#42424e" />
      <path d="M998 144h34v16l-14 6-18-6z" fill="url(#pin)" />
      <path d="M998 138h32v8h-32zM1002 198h28v8h-28z" fill="#54545c" />

      {/* Lower arm */}
      <path d="M262 312l-4-20 16-10 60 20-22 30z" fill="#8488a8" />
      <path d="M272 286l22-12h22l50 14 12 26-50 12-16 4z" fill="url(#bell)" />
      <path d="M262 318l8-10 42 22L120 884l-36-28z" fill="url(#edge)" />
      <path d="M312 330c8-30 56-44 66-12l-48 570-210-4z" fill="url(#face)" />
      <circle cx="342" cy="342" r="10" fill="#8c8c9c" />
      <circle cx="346" cy="340" r="5" fill="#34343c" />
      <path d="M258 282h12l8 14-14 6z" fill="#a0a4bc" />

      {/* Sketch axes */}
      <g stroke="#dede00" strokeWidth="3" fill="none">
        <path d="M1060 274l122-16M1060 274l92 28M1148 262v28M1166 258v32M1148 274h18M1166 220l12 28 12-28M1138 296l14 2" />
      </g>
      <path d="M1056 270h8v8h-8zM1178 255h7v7h-7zM1148 299h7v6h-7z" fill="#dede00" />
    </svg>
  );
}

function CompassWidget() {
  return (
    <svg viewBox="0 0 110 120" className="absolute right-[44px] top-px w-[110px] h-[120px]" shapeRendering="crispEdges" role="img" aria-label="Compass">
      <path d="M46 25c20 3 35 17 35 39l-12 3c-2-16-8-30-23-42z" fill="#207090" stroke="#e0c8ff" strokeWidth="2" />
      <path d="M45 25c14 4 27 22 27 42l-28 4z" fill="#000088" stroke="#e0c8ff" strokeWidth="2" />
      <path d="M44 71l29-4v12z" fill="#000088" stroke="#e0c8ff" strokeWidth="2" />
      <path d="M8 108c20-6 56-8 68-1 4 4-2 8-10 9-10 2-22 2-30 1z" fill="#207090" stroke="#e0c8ff" strokeWidth="2" />
      <path d="M46 12l-3 96" stroke="#e0c8ff" strokeWidth="2" />
      <circle cx="46" cy="12" r="3.500" fill="#e0c8ff" />
      <path d="M39 106h9v9h-9z" fill="#d00000" />
      <g fill="#f8f000" fontSize="13">
        <text x="58" y="14">z</text>
        <text x="95" y="69">y</text>
        <text x="87" y="81">x</text>
      </g>
    </svg>
  );
}

function CatiaLogo() {
  return (
    <svg viewBox="0 0 44 32" className="w-11 h-8" role="img" aria-label="CATIA">
      <path d="M11 2c7-1 10 0 8 3-1 2-5 4-9 5" fill="none" stroke="#d81820" strokeWidth="2" />
      <path d="M9 11c7-1 9 2 6 6-2 3-6 5-12 5l5-8" fill="none" stroke="#28207c" strokeWidth="2.200" />
      <path d="M26 9c-6-1-9 1-6 4 2 2 5 3 3 5-2 3-5 3-8 2" fill="none" stroke="#f09820" strokeWidth="2.600" />
      <text x="8" y="29" fontSize="10" fontWeight="bold" fontStyle="italic" fontFamily="Liberation Sans, sans-serif" fill="#28207c">CATIA</text>
    </svg>
  );
}

export default function App() {
  return (
    <div className="h-screen flex flex-col overflow-hidden bg-[#e6e6e6] font-['Open_Sans',sans-serif] text-[12px] leading-4 text-black select-none">
      <div className="flex-1 min-h-0 flex">
        {/* Slivers of the windows behind */}
        <div className="w-[7px] shrink-0 flex flex-col bg-gradient-to-r from-[#f0f0f0] to-[#c4c6c8]">
          <div className="h-[19px] ml-[2px] mb-px bg-[#f8d878] border-l border-[#d0a030]" />
          <div className="h-[22px] bg-[#1868b0]" />
          <div className="h-[93px] border-b border-[#c0c0c0]" />
          <div className="h-[365px]" />
          <div className="h-6 bg-[#c0c0c0]" />
        </div>

        <div className="flex-1 min-w-0 flex flex-col border border-[#1a6cb0]">
          {/* Title bar */}
          <header className="h-[26px] shrink-0 flex items-center bg-white pl-[9px]">
            <Comet className="w-[14px] h-[13px]" />
            <h1 className="pl-[6px] text-[8px] leading-4 font-semibold">CATIA V5 - [gripper.CATProduct]</h1>
            <div className="ml-auto flex items-center pr-[11px] gap-[22px]">
              <button type="button" aria-label="Minimize"><Minus size={14} strokeWidth={1.5} /></button>
              <button type="button" aria-label="Maximize"><Square size={14} strokeWidth={2} className="[&>rect]:[rx:0]" /></button>
              <button type="button" aria-label="Close"><X size={16} strokeWidth={1.5} /></button>
            </div>
          </header>

          {/* Menu bar */}
          <nav className="h-5 shrink-0 flex items-center bg-[#cfcfe6]">
            <Comet className="w-5 h-[17px]" />
            <button type="button" className="w-[49px] h-full bg-[#ffe3b8] pl-2 text-left"><u>S</u>tart</button>
            <button type="button" className="w-[95px] pl-[7px] text-left whitespace-nowrap">ENOVIA V5 VPM</button>
            <div className="w-3" />
            {menus.map((m) => (
              <button key={m.name} type="button" className={`${m.width} shrink-0 text-left whitespace-nowrap`}>
                <u>{m.name[0]}</u>{m.name.slice(1)}
              </button>
            ))}
            <div className="ml-auto h-full flex items-center gap-px pr-px text-[#6c7c90]">
              {['M5 12h6', 'M5 7h6v5H5zM7 6V4h6v5h-2M5 8h6', 'M5 5l6 6M11 5l-6 6'].map((d, i) => (
                <button key={d} type="button" aria-label={['Minimize document', 'Restore document', 'Close document'][i]} className="w-[18px] h-[18px] bg-white border border-[#e0e0e4] flex items-center justify-center">
                  <svg viewBox="0 0 16 16" className="w-4 h-4 shrink-0" fill="none" stroke="currentColor" strokeWidth={i === 1 ? 1 : 2} aria-hidden="true"><path d={d} /></svg>
                </button>
              ))}
            </div>
          </nav>

          {/* Top toolbar */}
          <div className="h-[35px] shrink-0 flex items-center pl-[203px] bg-[linear-gradient(#ffffff,#d0d0e6_25%,#cdcde4_65%,#8c8ca0)]">
            <Grip />
            {['point', 'curve', 'surface', 'solid'].map((n) => <Tool key={n} name={n} label={n} />)}
            <div className="w-[3px] h-full bg-[#9090a0] border-r-2 border-white ml-px mr-1" />
            <Tool name="boxArrow" label="Part selection" />
            <Tool name="boxArrow" label="Body selection" />
          </div>

          <div className="flex-1 min-h-0 flex border-t-2 border-[#5c5c60]">
            {/* Tree scroll bar */}
            <div className="w-[18px] shrink-0 flex flex-col border-l-2 border-t border-[#8c8c90] bg-[#7b7bff] border-r border-r-[#40408c]">
              <button type="button" aria-label="Scroll up" className="h-4 shrink-0 flex items-center justify-center border-b border-[#d0d0ff]">
                <svg viewBox="0 0 10 9" className="w-[10px] h-[9px]" aria-hidden="true"><path d="M5 0l5 9H0z" /></svg>
              </button>
              <div className="basis-0 grow-[480] border-b border-[#40408c]" />
              <div className="basis-0 grow-[102] bg-[repeating-conic-gradient(#7b7bff_0_25%,#8c8cb4_0_50%)] bg-[length:2px_2px]" />
              <button type="button" aria-label="Scroll down" className="h-4 shrink-0 flex items-center justify-center border-t border-b border-t-[#d0d0ff] border-b-[#40408c]">
                <svg viewBox="0 0 10 9" className="w-[10px] h-[9px]" aria-hidden="true"><path d="M5 9l5-9H0z" /></svg>
              </button>
            </div>

            {/* 3D view */}
            <main className="relative flex-1 min-w-0 overflow-hidden bg-[linear-gradient(#333366,#474776_68%,#acacc0)]">
              <div className="absolute left-[6px] top-4 bottom-0 w-[2px] bg-white" />
              <ul className="relative mt-px grid auto-rows-fr h-[628px] text-[11px] leading-[14px] text-white">
                <li className="flex items-center">
                  <span className="mb-1"><DocIcon /></span>
                  <span className="ml-[2px] bg-[#0a68f8] border-t border-l border-white border-r border-b border-r-[#606060] border-b-[#606060] leading-3">Product1.1</span>
                </li>
                {parts.map((p) => (
                  <li key={p} className="flex items-center pl-px">
                    <button type="button" aria-label={`Expand ${p}`} className="w-3 h-3 mb-1"><Node /></button>
                    <span className="w-1 h-[2px] bg-white mb-[2px]" />
                    <span className="ml-px mr-px mb-1"><DocIcon part /></span>
                    <span className="px-px rounded-xs bg-[#353567] whitespace-nowrap">{p}</span>
                  </li>
                ))}
                {/* Next row, still collapsed below the fold */}
                <li className="flex items-start pl-[18px]">
                  <DocIcon part />
                  <span className="mt-1 w-[84px] h-[15px] rounded-xs bg-[#353567]" />
                </li>
              </ul>
              <Robot />
              <CompassWidget />
              <svg viewBox="0 0 30 40" className="absolute right-[10px] bottom-[22px] w-[30px] h-10" fill="none" stroke="#fff" shapeRendering="crispEdges" role="img" aria-label="Axis system">
                <path d="M3.500 10v22l18-2M3.500 32l14 4M19 25l2 5M25 25l-4 9M15 31l6 5M20 31l-5 5M3 3.500h5l-5 5h5" />
              </svg>
            </main>

            {/* Right toolbar */}
            <aside aria-label="Product tools" className="w-[37px] shrink-0 flex flex-col pl-[5px] bg-[linear-gradient(to_right,#ffffff,#d0d0e6_25%,#cdcde4_70%,#9898b0)]">
              <div className="h-3 pt-[3px] shrink-0"><div className="h-[3px] w-4 bg-[#a4a4b0] border-t border-white" /></div>
              {sideTools.map((t, i) => (t === '|' ? <GripH key={i} /> : <Tool key={i} {...t} vertical />))}
              <div className="flex items-center pt-1">
                <div className="h-[3px] w-4 bg-[#a4a4b0] border-t border-white" />
                <span className="ml-[3px] rotate-90 text-[14px] leading-3 text-[#9a9aa8]">»</span>
              </div>
            </aside>
          </div>

          {/* Bottom toolbar */}
          <div className="relative h-[38px] shrink-0 flex items-center pt-[2px] border-b border-[#505058] bg-[linear-gradient(#ffffff,#dadaea_20%,#cdcde4_60%,#a0a0b4)]">
            <div className="w-3 h-7 shrink-0 pl-1"><div className="w-[3px] h-4 bg-[#a4a4b0] border-l border-white" /></div>
            {bottomTools.map((t, i) => {
              if (t === '|') return <Grip key={i} />;
              if (t === ' ') return <div key={i} className="w-[26px] h-[30px] shrink-0 pl-2"><div className="w-[3px] h-px bg-[#a4a4b0]" /></div>;
              return <Tool key={i} {...t} />;
            })}
            <span className="ml-auto pb-4 pr-2 text-[16px] leading-4 text-[#9a9aa8]">»</span>
            <CatiaLogo />
            <div className="w-1" />
            <div className="absolute right-[48px] -top-[9px] w-[236px] text-[#8c8c8c]/60 pointer-events-none whitespace-nowrap">
              <p className="text-[19px] leading-6">Activate Windows</p>
              <p className="text-[14px] leading-5">Go to Settings to activate Windows.</p>
            </div>
          </div>

          {/* Status bar */}
          <footer className="h-6 shrink-0 flex items-center bg-[#cfcfe6] pl-[3px]">
            <label htmlFor="command">Select an object or a command</label>
            <input id="command" type="text" className="ml-auto w-[300px] h-5 bg-white border border-[#707078] px-1" />
            <button type="button" aria-label="Dialog" className="ml-px w-[33px] h-[22px] flex items-center justify-center border-2 border-[#f0f0f8] border-r-[#80808c] border-b-[#80808c]">
              <svg viewBox="0 0 16 12" className="w-4 h-3" fill="none" stroke="#9494a0" aria-hidden="true"><path d="M2.500 2.500h6v5h-6zM10 8.500h2M14.500 1v10H2" /></svg>
            </button>
            <button type="button" aria-label="Information" className="ml-px w-[33px] h-[22px] flex items-center justify-center border-2 border-[#f0f0f8] border-r-[#80808c] border-b-[#80808c]">
              <svg viewBox="0 0 16 12" className="w-4 h-3" fill="none" stroke="#9494a0" aria-hidden="true"><circle cx="7.500" cy="5.500" r="4.500" /><path d="M7.500 5v3.500M7.500 2.500v1M14.500 1v10H2" strokeWidth="1.500" /></svg>
            </button>
          </footer>
        </div>

        <div className="w-2 shrink-0 flex flex-col bg-gradient-to-r from-[#c4c6c8] to-[#ececec]">
          <div className="h-6" />
          <div className="h-3 w-1 rounded-r-full bg-[#1868b0]" />
          <div className="h-[98px]" />
          <div className="h-11 border-t border-[#c0c0c0]" />
          <div className="h-[424px] bg-[#b8b8b8]" />
        </div>
      </div>

      <div className="h-2 shrink-0 flex flex-col bg-[#c8c8ca]">
        <div className="flex-1 flex justify-end"><div className="w-[22px] mr-[26px] bg-[#a8d4e8] border-x border-[#50a0c8]" /></div>
        <div className="h-[2px] bg-[#222]" />
      </div>
    </div>
  );
}
